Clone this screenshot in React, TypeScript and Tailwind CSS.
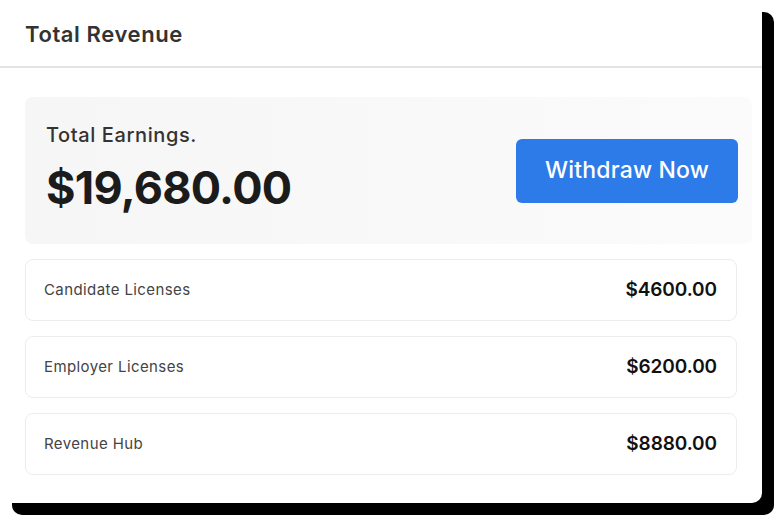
import React from 'react';

const rows = [
  { label: 'Candidate Licenses', value: '$4600.00' },
  { label: 'Employer Licenses', value: '$6200.00' },
  { label: 'Revenue Hub', value: '$8880.00' },
];

const App: React.FC = () => {
  return (
    <div className="min-h-[515px] w-[774px] bg-white" style={{ fontFamily: 'Inter, "Noto Sans", sans-serif' }}>
      <div className="w-[762px] h-[503px] bg-white rounded-[10px] shadow-[12px_12px_0_#000] overflow-hidden">
        <div className="h-[68px] flex items-center px-[25px] pt-[2px] border-b-2 border-[#e3e3e3]">
          <h2 className="text-[22px] font-semibold text-[#333] tracking-[0.6px]">Total Revenue</h2>
        </div>

        <div className="pl-[25px] pr-[10px] pt-[29px]">
          <div className="h-[147px] rounded-[8px] bg-gradient-to-r from-[#f6f6f6] to-[#fbfbfb] flex items-center justify-between pl-[21px] pr-[14px]">
            <div className="flex flex-col pb-[6px]">
              <span className="text-[20px] font-medium text-[#333] leading-none tracking-[0.6px]">Total Earnings.</span>
              <span className="text-[45px] font-bold text-[#1b1b1b] leading-none mt-[20px] tracking-[-0.7px]">$19,680.00</span>
            </div>
            <button className="w-[222px] h-[64px] rounded-[6px] bg-[#2c7be8] text-white text-[23px] font-medium tracking-[0.2px]">
              Withdraw Now
            </button>
          </div>
        </div>

        <div className="px-[25px] pt-[15px] flex flex-col gap-[15px]">
          {rows.map((r) => (
            <div
              key={r.label}
              className="h-[62px] rounded-[8px] border border-[#ececec] flex items-center justify-between pl-[18px] pr-[19px]"
            >
              <span className="text-[15px] text-[#444] tracking-[0.4px]">{r.label}</span>
              <span className="text-[19px] font-semibold text-[#111] tracking-[-0.1px]">{r.value}</span>
            </div>
          ))}
        </div>
      </div>
    </div>
  );
};

export default App;
